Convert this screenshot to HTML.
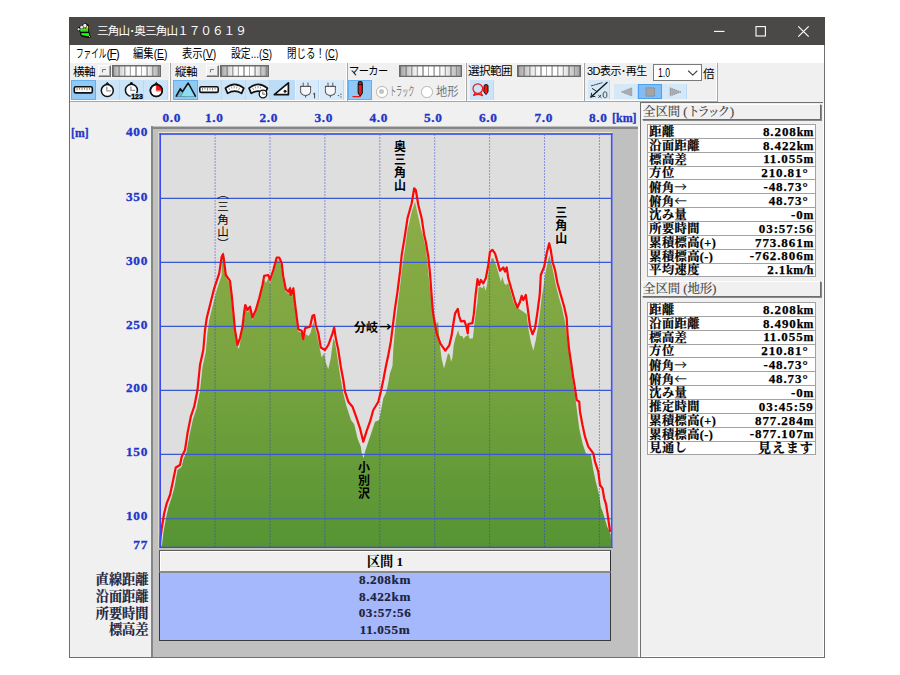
<!DOCTYPE html>
<html lang="ja">
<head>
<meta charset="utf-8">
<title>三角山･奥三角山１７０６１９</title>
<style>
html,body{margin:0;padding:0;background:#fff;}
body{width:900px;height:675px;position:relative;overflow:hidden;font-family:"Liberation Sans","Noto Sans CJK JP",sans-serif;}
.abs{position:absolute;}
.t{position:absolute;white-space:nowrap;line-height:1;}
.ui{font-family:"Liberation Sans","Noto Sans CJK JP",sans-serif;font-size:12px;color:#000;}
.mi{font-family:"Liberation Serif","Noto Serif CJK SC",serif;font-weight:bold;}
.ax{color:#2236c6;font-size:13.3px;letter-spacing:.7px;-webkit-text-stroke:.3px #2236c6;}
.grp{position:absolute;top:63px;height:39px;box-sizing:border-box;border-right:1px solid #a6a6a6;border-bottom:1px solid #a6a6a6;box-shadow:inset -1px -1px 0 #fff;}
.lb{font-size:11.6px;letter-spacing:-0.6px;}
.tiny{position:absolute;top:64.5px;width:13px;height:12px;box-sizing:border-box;background:#f0f0f0;border:1px solid;border-color:#fff #6e6e6e #6e6e6e #fff;box-shadow:inset -1px -1px 0 #a8a8a8;}
.sld{position:absolute;top:64.6px;height:10px;border:1px solid #6a6a6a;box-shadow:inset 1px 1px 0 rgba(100,100,100,.45),inset -1px -1px 0 rgba(100,100,100,.25);background:repeating-linear-gradient(90deg,rgba(105,105,105,.55) 0,rgba(105,105,105,.55) 1.1px,rgba(255,255,255,0) 1.5px,rgba(255,255,255,0) 5.2px,rgba(105,105,105,.55) 5.6px),linear-gradient(90deg,#a2a2a2 0%,#c4c4c4 10%,#ececec 24%,#fff 36%,#fff 64%,#ececec 76%,#c4c4c4 90%,#a2a2a2 100%);}
.btn{position:absolute;top:79.7px;height:20.3px;box-sizing:border-box;background:#cce4f7;border-right:1px solid #b9d9f4;}
.btn.on{background:#91c8f4;border:1px solid #62b0ef;}
.radio{position:absolute;width:11.5px;height:11.5px;box-sizing:border-box;border:1px solid #b4b4b4;border-radius:50%;background:#fff;}
.radio i{position:absolute;left:2.3px;top:2.3px;width:5px;height:5px;border-radius:50%;background:#c4c4c4;}
.yl{left:100px;width:48px;text-align:right;}
.vt{writing-mode:vertical-rl;font-family:"Liberation Sans","Noto Sans CJK JP",sans-serif;font-size:12px;line-height:12px;letter-spacing:1px;width:12px;color:#000;}
.hdr{position:absolute;left:641.5px;width:179.5px;height:16px;box-sizing:border-box;background:#f0f0f0;border:1px solid;border-color:#fdfdfd #6c6c6c #6c6c6c #fdfdfd;box-shadow:1px 1px 0 #8a8a8a;}
.ht{font-weight:normal;font-size:12.4px;color:#444;-webkit-text-stroke:.15px #444;}
.tbl{position:absolute;left:647px;width:168.5px;background:#fff;-webkit-text-stroke:.25px #000;font-family:"Liberation Serif","Noto Serif CJK SC",serif;font-weight:bold;font-size:13px;color:#000;}
.tr{position:relative;height:13.86px;box-sizing:border-box;border:1px solid #a2a2a2;border-bottom:none;line-height:12px;white-space:nowrap;}
.tbl .tr:last-child{border-bottom:1px solid #a2a2a2;height:14.86px;}
.tr .k{position:absolute;left:1.3px;top:.9px;font-size:12.2px;letter-spacing:.45px;}
.tr .v{position:absolute;right:.8px;top:.7px;letter-spacing:.9px;}
.sp{display:inline-block;width:5.2px;}
.un{font-size:11.8px;letter-spacing:.3px;}
.ar{font-family:"Noto Serif CJK SC",serif;letter-spacing:0;}
.sm{font-size:13.2px;color:#20233c;-webkit-text-stroke:.2px #20233c;}
.sx{transform-origin:0 50%;}
.gothic{font-family:"Liberation Sans","Noto Sans CJK JP",sans-serif;font-weight:bold;font-size:12px;color:#000;}
</style>
</head>
<body>
<!--WINDOW-->
<div class="abs" id="win" style="left:69px;top:17px;width:756px;height:641px;background:#f0f0f0;"></div>
<div class="abs" style="left:69px;top:17px;width:756px;height:28px;background:#4b4947;"></div>
<svg class="abs" style="left:70px;top:20px" width="24" height="22" viewBox="70 20 24 22">
<path d="M76.6 29.4 L77 28.4 L79.6 26.4 L81.4 24.9 L83.4 24.4 L84.8 23 L86.6 23.4 L88.9 25 L89.1 31.5 L89.7 33 L90.3 35.5 L91 37 L89.6 38 L86.5 37.7 L84.5 37.4 L82 36.7 L80.2 35.2 L80 32.6 L79.6 31.6 L77.4 30.8 Z" fill="#0c0c0c"/>
<ellipse cx="78.6" cy="29.2" rx="1.1" ry="1.2" fill="#dcdcdc"/>
<ellipse cx="81.7" cy="27.2" rx="1.5" ry="1.6" fill="#e6e0f0"/>
<ellipse cx="84.9" cy="25.7" rx="1.7" ry="1.9" fill="#efefef"/>
<path d="M85.8 28.8 L87.3 25.8 L88.2 26 L88.2 28.8 Z" fill="#f8f000"/>
<path d="M83.2 28.8 L84.4 27.6 L85.8 28.8 Z" fill="#d8e010"/>
<rect x="80.2" y="28.8" width="7.9" height="2.1" fill="#12f81a"/>
<rect x="80.4" y="30.9" width="7.7" height=".6" fill="#e2a8e2"/>
<rect x="81.6" y="33" width="7" height=".6" fill="#e2a8e2"/>
<path d="M81.2 33.6 H88.9 L89.2 36 L86.8 36.2 L85.6 35.8 L83.6 35.6 L81.6 35 Z" fill="#12f81a"/>
<circle cx="89.4" cy="36.6" r=".7" fill="#e8d800"/>
</svg>
<div class="t ui" style="left:97px;top:25.2px;font-size:11.6px;color:#fff;letter-spacing:-0.85px;">三角山･奥三角山<span style="letter-spacing:0px;">１７０６１９</span></div>
<svg class="abs" style="left:700px;top:17px" width="125" height="28" viewBox="0 0 125 28">
<line x1="14" y1="14.4" x2="24.5" y2="14.4" stroke="#fff" stroke-width="1.1"/>
<rect x="56" y="9.6" width="9.4" height="9.4" fill="none" stroke="#fff" stroke-width="1.1"/>
<path d="M98.3 9.3 L108.7 19.7 M108.7 9.3 L98.3 19.7" stroke="#fff" stroke-width="1.2" fill="none"/>
</svg>
<div class="abs" style="left:70px;top:45px;width:754px;height:18px;background:#fff;"></div>
<div class="t ui sx" style="left:76px;top:48px;transform:scaleX(.635);">ファイル</div>
<div class="t ui" style="left:106.5px;top:48px;letter-spacing:-1px;">(<u>F</u>)</div>
<div class="t ui sx" style="left:132.5px;top:48px;transform:scaleX(.86);">編集(<u>E</u>)</div>
<div class="t ui sx" style="left:181.5px;top:48px;transform:scaleX(.857);">表示(<u>V</u>)</div>
<div class="t ui sx" style="left:230.5px;top:48px;transform:scaleX(.82);">設定...(<u>S</u>)</div>
<div class="t ui sx" style="left:287px;top:48px;transform:scaleX(.79);">閉じる！(<u>C</u>)</div>
<!-- toolbar group frames -->
<div class="grp" style="left:70px;width:101px;"></div>
<div class="grp" style="left:171px;width:176.5px;"></div>
<div class="grp" style="left:347.5px;width:119px;"></div>
<div class="grp" style="left:466.5px;width:118px;"></div>
<div class="grp" style="left:584.5px;width:133.5px;"></div>
<!-- labels -->
<div class="t ui lb" style="left:73px;top:65.5px;">横軸</div>
<div class="t ui lb" style="left:175px;top:65.5px;">縦軸</div>
<div class="t ui lb sx" style="left:349px;top:65px;transform:scaleX(.88);">マーカー</div>
<div class="t ui lb" style="left:468px;top:64.8px;">選択範囲</div>
<div class="t ui lb sx" style="left:586.5px;top:64.5px;transform:scaleX(.95);">3D表示･再生</div>
<div class="t ui lb" style="left:703px;top:68px;">倍</div>
<!-- tiny buttons + sliders -->
<div class="tiny" style="left:97.5px;"></div><div class="sld" style="left:111.7px;width:47px;"></div>
<div class="tiny" style="left:205.5px;"></div><div class="sld" style="left:219.6px;width:47.6px;"></div>
<div class="sld" style="left:398.7px;width:61.2px;"></div>
<div class="sld" style="left:517.2px;width:61.5px;"></div>
<!-- combobox -->
<div class="abs" style="left:653px;top:64.2px;width:47px;height:15.3px;background:#fff;border:1px solid #7a7a7a;"></div>
<div class="t ui sx" style="left:657.5px;top:67px;font-size:12px;transform:scaleX(.72);">1.0</div>
<!-- button backgrounds -->
<div class="btn on" style="left:71px;width:24.5px;"></div>
<div class="btn" style="left:95.5px;width:24px;"></div>
<div class="btn" style="left:119.5px;width:24px;"></div>
<div class="btn" style="left:143.5px;width:24px;"></div>
<div class="btn on" style="left:172.5px;width:25px;"></div>
<div class="btn" style="left:197.5px;width:24px;"></div>
<div class="btn" style="left:221.5px;width:24px;"></div>
<div class="btn" style="left:245.5px;width:24.5px;"></div>
<div class="btn" style="left:270px;width:24.5px;background:#bddcf5;"></div>
<div class="btn" style="left:295.5px;width:23.5px;background:#d9eaf9;"></div>
<div class="btn" style="left:320px;width:24px;background:#d9eaf9;"></div>
<div class="btn on" style="left:348px;width:24px;"></div>
<div class="btn" style="left:469.5px;width:24px;"></div>
<div class="btn" style="left:587.5px;width:22.5px;top:80px;height:19px;background:#d5e8f8;"></div>
<div class="btn" style="left:614px;width:24px;top:83.5px;height:15.5px;background:#d5e8f8;"></div>
<div class="btn on" style="left:638px;width:24px;top:83.5px;height:15.5px;background:#82bcf5;border-color:#4ba2f2;"></div>
<div class="btn" style="left:662px;width:24.5px;top:83.5px;height:15.5px;background:#d5e8f8;"></div>
<!-- radios -->
<div class="radio" style="left:376px;top:86px;"><i></i></div>
<div class="t ui sx" style="left:390px;top:86px;color:#777;transform:scaleX(.51);">トラック</div>
<div class="radio" style="left:421px;top:86px;"></div>
<div class="t ui sx" style="left:436px;top:86px;color:#777;transform:scaleX(.94);">地形</div>
<!-- icons -->
<svg class="abs" style="left:0;top:0" width="900" height="110" viewBox="0 0 900 110">
<g fill="none" stroke="#111" stroke-linecap="round" stroke-linejoin="round">
<!-- tiny button marks -->
<path d="M102.5 72 V69.5 H105.5" stroke="#777" stroke-width="1"/>
<path d="M210.5 72 V69.5 H213.5" stroke="#777" stroke-width="1"/>
<!-- combobox chevron -->
<path d="M688.5 71 L692.8 75.2 L697 71" stroke="#444" stroke-width="1.1"/>
<!-- ruler 1 -->
<rect x="74.3" y="86.7" width="18" height="6.2" rx="1.5" fill="#fff" stroke-width="1.6"/>
<path d="M77 88 V90 M79.5 88 V89.3 M82 88 V90 M84.5 88 V89.3 M87 88 V90 M89.5 88 V89.3" stroke="#666" stroke-width=".8"/>
<!-- clock 1 -->
<circle cx="107.3" cy="90.6" r="6" fill="#fff" stroke-width="1.5"/>
<path d="M106.2 83.6 L107.3 82.4 L108.4 83.6 Z" fill="#111" stroke-width="1"/>
<path d="M106.8 87.2 V90.8 H110.6" stroke="#999" stroke-width="1.3"/>
<!-- clock 2 (123) -->
<circle cx="131.4" cy="90.2" r="6" fill="#fff" stroke-width="1.5"/>
<path d="M130.3 83.2 L131.4 82 L132.5 83.2 Z" fill="#111" stroke-width="1"/>
<path d="M130.9 86.8 V90.4 H134.7" stroke="#999" stroke-width="1.3"/>
<rect x="130.6" y="93" width="12.6" height="6.6" fill="#cce4f7" stroke="none"/>
<!-- clock 3 (red quarter) -->
<circle cx="156.3" cy="90.6" r="6" fill="#fff" stroke-width="1.5"/>
<path d="M156.3 90.6 V84.6 A6 6 0 0 1 162.3 90.6 Z" fill="#f01010" stroke="#f01010" stroke-width=".6"/>
<circle cx="156.3" cy="90.6" r="6" stroke-width="1.5"/>
<path d="M155.2 83.6 L156.3 82.4 L157.4 83.6 Z" fill="#111" stroke-width="1"/>
<!-- mountains -->
<path d="M176.2 96.2 L180.4 88.6 L185 96.2 Z" fill="#6fb6ca" stroke="#4a8a9a" stroke-width=".8"/>
<path d="M181 96.2 L188.2 83 L195.4 96.2 Z" fill="#8edcf2" stroke="#5a9aac" stroke-width=".8"/>
<path d="M176.2 96.2 L180.4 88.6 L182.4 91.6 L188.2 83 L195.4 96.2" stroke-width="1.5"/>
<!-- ruler 2 -->
<rect x="199.8" y="86.8" width="18.4" height="5.6" rx="1.5" fill="#fff" stroke-width="1.6"/>
<path d="M202.5 88 V90 M205 88 V89.3 M207.5 88 V90 M210 88 V89.3 M212.5 88 V90 M215 88 V89.3" stroke="#666" stroke-width=".8"/>
<!-- arched ruler -->
<path d="M225.4 88.2 Q234.6 80.6 243.8 88.2 L241.6 93.4 Q234.6 88.8 227.6 93.4 Z" fill="#fff" stroke-width="1.7"/>
<path d="M229 88.2 L229.6 89.6 M231.5 86.8 L231.9 88.2 M234.2 86.4 V88 M236.9 86.8 L236.5 88.2 M239.4 88.2 L238.8 89.6" stroke="#777" stroke-width=".8"/>
<!-- arched ruler + clock -->
<path d="M249 88.2 Q258.2 80.6 267.4 88.2 L265.2 93.4 Q258.2 88.8 251.2 93.4 Z" fill="#fff" stroke-width="1.7"/>
<path d="M252.8 88.2 L253.4 89.6 M255.3 86.8 L255.7 88.2 M258 86.4 V88 M260.7 86.8 L260.3 88.2" stroke="#777" stroke-width=".8"/>
<circle cx="263" cy="94" r="3.8" fill="#fff" stroke-width="1.3"/>
<path d="M262.8 91.8 V94.2 H265" stroke="#555" stroke-width=".9"/>
<!-- set square -->
<path d="M274.3 94.6 L288.4 82.8 V94.6 Z" fill="#fff" stroke-width="1.7"/>
<circle cx="285" cy="91.3" r="1.1" fill="#111" stroke-width=".8"/>
<!-- plugs -->
<g stroke="#555" stroke-width="1.1" stroke-dasharray="1.4 1.1">
<path d="M300.6 86.4 H310.6 V91 Q310.6 95 305.6 95.4 Q300.6 95 300.6 91 Z" fill="#f4f8fc"/>
<path d="M303.2 86 V83 M308 86 V83 M305.6 95.6 V97.6"/>
<path d="M325.4 86.4 H335.4 V91 Q335.4 95 330.4 95.4 Q325.4 95 325.4 91 Z" fill="#f4f8fc"/>
<path d="M328 86 V83 M332.8 86 V83 M330.4 95.6 V97.6"/>
</g>
<path d="M313.4 94 L314.6 93 V98" stroke="#444" stroke-width="1"/>
<path d="M338.2 95.6 h.6 M340.6 94.2 h.6 M340.6 97 h.6" stroke="#555" stroke-width="1"/>
<!-- marker button -->
<path d="M358.2 83.2 Q358.2 81.6 360.2 81.6 Q362.3 81.6 362.3 83.2 V93 L360.3 96 L358.2 93 Z" fill="#f01414" stroke-width="1.1"/>
<path d="M358.6 84.6 H362" stroke-width="1"/>
<path d="M353 96.7 H360" stroke="#f01414" stroke-width="1.3"/>
<!-- selection button -->
<circle cx="477.8" cy="88.6" r="4.8" stroke="#f01414" stroke-width="1.2"/>
<path d="M475.4 92.6 L473.6 95.2 M480.6 92.6 L482.6 95.6 M474 95.4 Q478 93.4 482.4 95.6" stroke="#f01414" stroke-width="1.2"/>
<path d="M484 86 Q484 84.6 486 84.6 Q488 84.6 488 86 V92 L486 94.6 L484 92 Z" fill="#f01414" stroke-width="1"/>
<!-- 3D icon -->
<path d="M591 97 L607 82.4" stroke-width="1.3"/>
<path d="M591.4 85.8 L602 82.8" stroke="#444" stroke-width="1" stroke-dasharray="1.5 1"/>
<path d="M592.4 88.6 L597 91.6 M591 96.8 l4 -.4 M591 96.8 l.6 -3.6" stroke="#222" stroke-width="1"/>
<path d="M598.6 95.4 L601 97.4 M598.6 97.6 l2.2 -2.4" stroke="#333" stroke-width=".9"/>
<rect x="603.2" y="92" width="3.6" height="5.6" rx="1.4" stroke="#333" stroke-width=".9" stroke-dasharray="1.4 .8"/>
</g>
<!-- play controls -->
<path d="M621.4 91.9 L631.8 87.8 V96 Z" fill="#a9acb0" stroke="#8a8e94" stroke-width=".9" stroke-dasharray="1.2 1"/>
<rect x="646" y="87.8" width="8.6" height="8.4" fill="#a2a4a6" stroke="#777" stroke-width=".8" stroke-dasharray="1.2 1"/>
<path d="M681 91.9 L670 87.8 V96 Z" fill="#a9acb0" stroke="#8a8e94" stroke-width=".9" stroke-dasharray="1.2 1"/>
<text x="131.2" y="99.2" font-family="Liberation Sans, sans-serif" font-weight="bold" font-size="7.8" fill="#000" stroke="#000" stroke-width=".35" textLength="11.8" lengthAdjust="spacingAndGlyphs">123</text>
</svg>
<!-- gray sunken chart panel -->
<div class="abs" style="left:151px;top:126px;width:487px;height:531px;background:#c0c0c0;"></div>
<div class="abs" style="left:151px;top:127px;width:487px;height:2px;background:#868686;"></div>
<div class="abs" style="left:151px;top:126px;width:2px;height:531px;background:#868686;"></div>
<div class="abs" style="left:638px;top:126px;width:1.5px;height:531px;background:#fafafa;"></div>
<!-- toolbar/bottom line above axis -->
<svg class="abs" style="left:0;top:0" width="900" height="675" viewBox="0 0 900 675">
<defs><linearGradient id="gg" gradientUnits="userSpaceOnUse" x1="0" y1="190" x2="0" y2="548"><stop offset="0" stop-color="#8fae47"/><stop offset="0.45" stop-color="#7ba540"/><stop offset="1" stop-color="#569433"/></linearGradient></defs>
<rect x="160" y="133" width="452" height="415" fill="#dedede"/>
<polygon points="160.0,548.0 162.0,545.0 163.5,532.0 166.0,518.0 168.5,507.0 171.5,498.0 174.5,487.0 177.5,470.0 181.5,467.0 183.5,459.0 186.5,452.0 189.5,435.0 193.0,419.0 196.5,408.5 199.8,392.0 202.5,367.0 205.8,352.0 207.5,332.0 209.2,320.0 212.5,306.5 216.7,290.0 221.5,275.5 222.3,260.0 223.7,251.0 224.7,262.0 225.8,277.0 229.5,283.0 231.0,296.0 232.6,312.0 234.3,330.0 236.5,344.0 239.0,349.0 240.5,340.0 243.0,328.0 244.6,314.0 245.6,308.0 247.5,312.5 250.0,309.5 252.5,320.0 255.8,312.5 259.2,300.5 262.5,287.5 264.5,279.5 266.0,283.0 268.3,278.0 270.0,284.0 273.3,273.0 276.7,260.5 279.2,260.5 281.3,266.0 282.8,279.0 285.3,291.0 288.3,294.0 290.6,285.0 291.3,297.0 293.3,291.0 294.5,305.0 296.2,318.0 297.8,331.0 301.5,333.0 302.7,340.0 303.8,340.0 305.5,334.0 308.5,336.0 310.5,333.0 313.3,322.0 316.7,333.5 320.0,350.0 321.7,357.5 324.2,353.0 325.8,363.0 328.3,369.0 330.8,358.0 333.3,338.5 335.0,342.0 337.5,358.0 340.0,375.0 343.3,393.5 346.7,407.0 348.3,411.7 351.0,420.0 354.2,424.2 357.5,438.3 360.8,446.7 361.7,453.3 363.7,458.3 365.0,451.7 368.3,441.7 371.7,431.7 375.0,421.7 379.2,420.0 380.8,411.7 383.3,398.3 385.8,393.3 387.5,386.7 390.0,373.3 392.5,366.0 393.3,349.0 395.0,329.0 397.5,306.7 400.0,286.7 402.5,265.0 405.0,248.3 407.5,230.0 411.7,211.7 415.0,201.7 417.5,213.3 420.8,228.3 423.3,237.0 425.8,248.3 427.5,263.3 429.2,281.7 431.7,301.7 434.2,318.3 435.6,320.4 436.6,324.0 438.2,321.5 439.1,335.6 440.4,348.9 441.8,359.6 444.0,368.4 446.2,360.4 448.0,353.3 449.8,355.0 451.1,361.8 452.4,357.8 453.8,344.4 455.6,337.3 458.2,330.2 459.6,335.6 462.7,336.4 463.6,339.1 465.3,336.4 468.4,335.1 469.8,338.7 472.9,338.2 473.8,329.3 475.1,317.8 477.3,302.7 478.5,288.0 480.0,286.7 482.5,288.3 484.0,285.0 485.5,291.0 487.0,285.0 489.0,267.0 491.7,258.3 493.3,258.3 496.0,265.0 498.3,272.5 500.8,281.7 502.5,276.7 504.2,283.3 505.8,285.0 508.3,283.3 510.8,291.7 513.3,301.7 515.8,306.7 518.3,308.3 523.3,311.7 526.7,314.2 528.3,328.3 530.8,341.7 533.3,350.8 535.8,340.0 538.3,325.0 540.0,311.7 541.7,297.0 543.3,288.3 545.0,275.0 549.2,255.0 552.5,268.3 555.8,285.0 559.2,298.3 562.0,308.0 565.0,322.0 567.0,338.0 569.0,352.0 571.0,366.7 572.5,380.0 574.2,390.0 576.0,403.0 579.2,428.3 582.5,443.3 585.8,453.3 590.8,455.0 593.3,470.0 595.8,481.7 599.2,495.0 600.8,507.0 602.8,512.0 607.2,526.7 610.6,534.0 611.5,548.0" fill="url(#gg)"/>
<line x1="215.1" y1="134" x2="215.1" y2="547" stroke="#2a3fd8" stroke-opacity=".48" stroke-width="1" stroke-dasharray="2 1"/>
<line x1="270.0" y1="134" x2="270.0" y2="547" stroke="#2a3fd8" stroke-opacity=".48" stroke-width="1" stroke-dasharray="2 1"/>
<line x1="324.9" y1="134" x2="324.9" y2="547" stroke="#2a3fd8" stroke-opacity=".48" stroke-width="1" stroke-dasharray="2 1"/>
<line x1="379.8" y1="134" x2="379.8" y2="547" stroke="#2a3fd8" stroke-opacity=".48" stroke-width="1" stroke-dasharray="2 1"/>
<line x1="434.7" y1="134" x2="434.7" y2="547" stroke="#2a3fd8" stroke-opacity=".48" stroke-width="1" stroke-dasharray="2 1"/>
<line x1="489.6" y1="134" x2="489.6" y2="547" stroke="#2a3fd8" stroke-opacity=".48" stroke-width="1" stroke-dasharray="2 1"/>
<line x1="544.5" y1="134" x2="544.5" y2="547" stroke="#2a3fd8" stroke-opacity=".48" stroke-width="1" stroke-dasharray="2 1"/>
<line x1="599.4" y1="134" x2="599.4" y2="547" stroke="#2a3fd8" stroke-opacity=".48" stroke-width="1" stroke-dasharray="2 1"/>
<line x1="160" y1="198.4" x2="612" y2="198.4" stroke="#3a58d0" stroke-width="1.1"/>
<line x1="160" y1="262.4" x2="612" y2="262.4" stroke="#3a58d0" stroke-width="1.1"/>
<line x1="160" y1="326.4" x2="612" y2="326.4" stroke="#3a58d0" stroke-width="1.1"/>
<line x1="160" y1="390.4" x2="612" y2="390.4" stroke="#3a58d0" stroke-width="1.1"/>
<line x1="160" y1="454.4" x2="612" y2="454.4" stroke="#3a58d0" stroke-width="1.1"/>
<line x1="160" y1="518.8" x2="612" y2="518.8" stroke="#3a58d0" stroke-width="1.1"/>
<polyline points="160.0,546.0 160.5,538.0 161.7,528.3 164.2,513.3 166.7,503.3 170.0,495.0 172.5,483.3 175.8,467.5 180.0,465.0 181.7,456.7 185.0,450.0 187.5,433.3 190.8,416.7 194.2,406.7 197.5,390.0 200.0,365.0 203.3,350.0 205.0,330.0 206.7,318.3 210.0,305.0 214.2,288.3 219.2,273.3 221.7,256.7 223.0,254.2 224.2,261.7 225.8,275.0 230.0,280.8 231.7,295.0 233.3,311.7 235.0,330.0 237.5,345.0 240.0,338.0 242.5,326.7 244.2,311.7 245.3,305.0 247.5,310.0 250.0,306.7 252.5,317.5 255.8,310.0 259.2,298.3 262.5,285.0 264.2,275.8 268.3,275.0 270.0,280.0 273.3,270.0 276.7,257.5 279.2,257.5 281.7,263.3 283.3,276.7 285.8,289.2 288.3,291.7 290.0,288.3 290.8,295.0 293.3,288.3 295.0,303.3 296.7,316.7 298.3,329.2 301.7,330.8 303.3,339.2 305.0,328.3 310.0,326.7 312.5,315.8 314.2,315.0 315.8,325.0 318.3,333.3 320.8,347.5 325.0,350.0 328.3,345.0 332.5,333.3 334.2,327.5 335.8,338.3 338.3,350.0 340.8,366.7 343.3,380.0 345.0,391.7 348.3,401.7 352.5,406.7 356.7,418.3 360.0,428.3 363.3,441.7 366.7,430.8 370.0,421.7 373.3,410.0 378.3,401.7 380.8,391.7 383.3,380.0 385.8,366.7 388.3,355.0 390.8,341.7 392.5,328.3 395.0,308.3 397.5,291.7 400.0,271.7 401.7,255.0 404.2,240.0 405.0,235.0 407.5,218.3 411.7,203.3 414.2,188.3 415.8,190.0 418.3,205.0 421.7,218.3 424.2,235.0 425.8,241.7 428.3,256.7 430.0,273.3 431.6,295.0 432.9,311.6 434.7,323.1 436.9,333.8 440.4,343.6 445.3,350.7 449.3,345.3 451.6,335.6 453.3,324.0 455.1,313.3 457.8,308.9 459.1,316.0 460.9,321.3 464.4,320.9 466.2,325.8 467.7,333.3 468.4,324.0 472.4,323.1 473.8,314.2 475.6,295.0 477.5,279.2 479.2,285.0 480.8,280.0 483.3,283.3 485.8,278.3 488.3,265.0 490.0,251.7 492.5,250.0 495.0,253.3 497.5,261.7 500.0,270.8 503.3,267.5 505.0,271.7 506.7,267.5 508.3,278.3 511.7,290.0 515.0,301.7 517.5,307.5 520.0,301.7 521.7,295.8 523.3,300.0 525.8,295.0 527.5,306.7 529.2,320.0 530.0,326.7 532.5,334.2 535.0,328.3 537.5,311.7 539.7,295.0 540.0,290.0 540.8,275.0 544.2,266.7 546.7,253.3 549.2,243.3 550.8,250.0 552.5,261.7 555.0,270.0 557.5,283.3 560.8,295.0 564.2,306.7 566.7,318.3 567.5,333.3 569.2,350.0 571.7,366.7 573.3,378.3 575.0,388.3 576.7,400.0 579.2,401.7 580.0,411.7 582.5,425.0 585.0,436.7 588.3,446.7 593.3,453.3 595.0,461.7 598.3,471.7 600.0,485.0 602.5,488.3 604.2,498.3 606.1,504.4 608.0,517.0 610.0,531.0" fill="none" stroke="#fb0808" stroke-width="2.2" stroke-linejoin="round" stroke-linecap="round"/>
<line x1="159" y1="132.4" x2="612.5" y2="132.4" stroke="#f6f2c8" stroke-width="0.9"/>
<line x1="158.9" y1="132" x2="158.9" y2="548" stroke="#f6f2c8" stroke-width="0.8"/>
<line x1="159.5" y1="134" x2="612.5" y2="134" stroke="#5668ea" stroke-width="2"/>
<line x1="160.2" y1="133" x2="160.2" y2="548" stroke="#3c46f2" stroke-width="1.6"/>
<line x1="611.7" y1="133" x2="611.7" y2="548" stroke="#4450f0" stroke-width="1.6"/>
<line x1="159.5" y1="547.4" x2="612.5" y2="547.4" stroke="#3c48e8" stroke-width="1.4"/>
</svg>
<!-- x axis labels -->
<div class="t mi ax" style="left:162.5px;top:111px;">0.0</div>
<div class="t mi ax" style="left:205px;top:111px;">1.0</div>
<div class="t mi ax" style="left:259.5px;top:111px;">2.0</div>
<div class="t mi ax" style="left:314.5px;top:111px;">3.0</div>
<div class="t mi ax" style="left:369.5px;top:111px;">4.0</div>
<div class="t mi ax" style="left:424px;top:111px;">5.0</div>
<div class="t mi ax" style="left:479px;top:111px;">6.0</div>
<div class="t mi ax" style="left:534.5px;top:111px;">7.0</div>
<div class="t mi ax" style="left:589px;top:111px;">8.0</div>
<div class="t mi ax sx" id="km" style="left:611.5px;top:111px;letter-spacing:0;transform:scaleX(.9);">[km]</div>
<!-- y axis labels -->
<div class="t mi ax sx" id="um" style="left:71.3px;top:126px;letter-spacing:0;transform:scaleX(.88);">[m]</div>
<div class="t mi ax yl" style="top:125px;">400</div>
<div class="t mi ax yl" style="top:190px;">350</div>
<div class="t mi ax yl" style="top:254px;">300</div>
<div class="t mi ax yl" style="top:318px;">250</div>
<div class="t mi ax yl" style="top:381.3px;">200</div>
<div class="t mi ax yl" style="top:445.3px;">150</div>
<div class="t mi ax yl" style="top:509.3px;">100</div>
<div class="t mi ax yl" style="top:537.6px;">77</div>
<!-- peak labels -->
<div class="t vt" style="left:216px;top:196px;font-weight:normal;font-size:11.5px;letter-spacing:1.2px;"><span style="margin-top:-8px;display:inline-block;">（</span>三角山<span style="margin-top:-1px;display:inline-block;">）</span></div>
<div class="t vt gothic" style="left:392.6px;top:140px;">奥三角山</div>
<div class="t vt gothic" style="left:553.7px;top:206.2px;">三角山</div>
<div class="t vt gothic" style="left:356.4px;top:461px;">小別沢</div>
<div class="t gothic" style="left:354px;top:320.5px;">分岐<span style="font-family:'Noto Sans CJK JP',sans-serif;margin-left:1.5px;">→</span></div>
<!-- right panel frame -->
<div class="abs" style="left:639.5px;top:102px;width:184.5px;height:555px;box-sizing:border-box;border-left:1.6px solid #707070;border-top:1.6px solid #707070;"></div>
<!-- header 1 -->
<div class="hdr" style="top:104px;"></div>
<div class="t mi ht" style="left:643px;top:106px;">全区間 (<span style="letter-spacing:-2.2px;">トラック</span><span style="margin-left:2px">)</span></div>
<div class="tbl" style="top:124px;">
<div class="tr"><span class="k">距離</span><span class="v">8.208<span class="un">km</span></span></div>
<div class="tr"><span class="k">沿面距離</span><span class="v">8.422<span class="un">km</span></span></div>
<div class="tr"><span class="k">標高差</span><span class="v">11.055<span class="un">m</span></span></div>
<div class="tr"><span class="k">方位</span><span class="v">210.81°<i class="sp"></i></span></div>
<div class="tr"><span class="k">俯角<span class="ar">→</span></span><span class="v">-48.73°<i class="sp"></i></span></div>
<div class="tr"><span class="k">俯角<span class="ar">←</span></span><span class="v">48.73°<i class="sp"></i></span></div>
<div class="tr"><span class="k">沈み量</span><span class="v">-0<span class="un">m</span></span></div>
<div class="tr"><span class="k">所要時間</span><span class="v">03:57:56</span></div>
<div class="tr"><span class="k">累積標高(+)</span><span class="v">773.861<span class="un">m</span></span></div>
<div class="tr"><span class="k">累積標高(-)</span><span class="v">-762.806<span class="un">m</span></span></div>
<div class="tr"><span class="k">平均速度</span><span class="v">2.1<span class="un">km/h</span></span></div>
</div>
<!-- header 2 -->
<div class="hdr" style="top:281px;"></div>
<div class="t mi ht" style="left:643px;top:283px;">全区間 (地形)</div>
<div class="tbl" style="top:302px;">
<div class="tr"><span class="k">距離</span><span class="v">8.208<span class="un">km</span></span></div>
<div class="tr"><span class="k">沿面距離</span><span class="v">8.490<span class="un">km</span></span></div>
<div class="tr"><span class="k">標高差</span><span class="v">11.055<span class="un">m</span></span></div>
<div class="tr"><span class="k">方位</span><span class="v">210.81°<i class="sp"></i></span></div>
<div class="tr"><span class="k">俯角<span class="ar">→</span></span><span class="v">-48.73°<i class="sp"></i></span></div>
<div class="tr"><span class="k">俯角<span class="ar">←</span></span><span class="v">48.73°<i class="sp"></i></span></div>
<div class="tr"><span class="k">沈み量</span><span class="v">-0<span class="un">m</span></span></div>
<div class="tr"><span class="k">推定時間</span><span class="v">03:45:59</span></div>
<div class="tr"><span class="k">累積標高(+)</span><span class="v">877.284<span class="un">m</span></span></div>
<div class="tr"><span class="k">累積標高(-)</span><span class="v">-877.107<span class="un">m</span></span></div>
<div class="tr"><span class="k">見通し</span><span class="v">見えます</span></div>
</div>
<!-- summary header box -->
<div class="abs" style="left:159px;top:550px;width:451.7px;height:21.5px;box-sizing:border-box;background:#f0f0f0;border:1px solid;border-color:#5a5a5a #2e2e2e #8a8a8a #5a5a5a;box-shadow:inset 1px 1px 0 #fff;"></div>
<div class="t mi" style="left:159px;width:452px;text-align:center;top:554.5px;font-size:13.3px;color:#000;">区間 1</div>
<!-- summary blue body -->
<div class="abs" style="left:159px;top:572px;width:451.7px;height:69px;box-sizing:border-box;background:#a6b8fc;border:1px solid;border-color:#8a8a8a #3a3a3a #3a3a3a #3a3a3a;"></div>
<div class="t mi sm" style="left:60px;width:88.5px;text-align:right;top:573.3px;">直線距離</div>
<div class="t mi sm" style="left:159px;width:452px;text-align:center;top:573.1px;letter-spacing:.55px;">8.208km</div>
<div class="t mi sm" style="left:60px;width:88.5px;text-align:right;top:589.9px;">沿面距離</div>
<div class="t mi sm" style="left:159px;width:452px;text-align:center;top:589.7px;letter-spacing:.55px;">8.422km</div>
<div class="t mi sm" style="left:60px;width:88.5px;text-align:right;top:606.5px;">所要時間</div>
<div class="t mi sm" style="left:159px;width:452px;text-align:center;top:606.3px;letter-spacing:.55px;">03:57:56</div>
<div class="t mi sm" style="left:60px;width:88.5px;text-align:right;top:623.1px;">標高差</div>
<div class="t mi sm" style="left:159px;width:452px;text-align:center;top:622.9px;letter-spacing:.55px;">11.055m</div>
<!-- window frame lines -->
<div class="abs" style="left:69px;top:45px;width:1px;height:613px;background:#6f6f6f;"></div>
<div class="abs" style="left:824px;top:45px;width:1px;height:613px;background:#6f6f6f;"></div>
<div class="abs" style="left:69px;top:657px;width:756px;height:1px;background:#6f6f6f;"></div>
<div class="abs" style="left:823px;top:102px;width:1px;height:555px;background:#fdfdfd;"></div>
<div class="abs" style="left:641px;top:656px;width:183px;height:1px;background:#fdfdfd;"></div>
</body>
</html>
